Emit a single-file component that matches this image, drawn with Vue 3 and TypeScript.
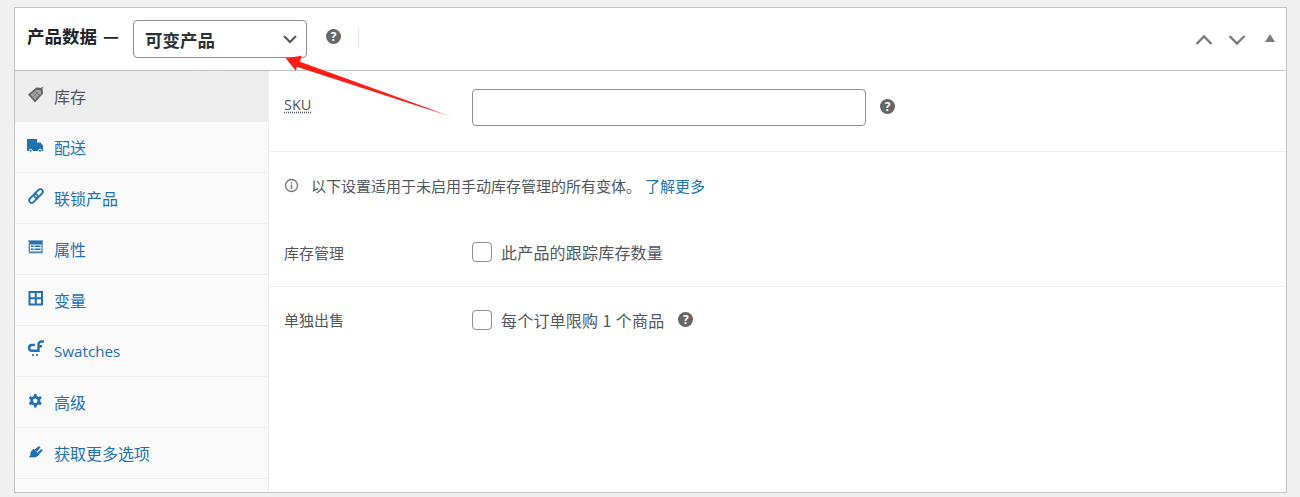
<script setup lang="ts">
interface Tab { key: string; label: string; active?: boolean }
const tabs: Tab[] = [
  { key: 'tag', label: '库存', active: true },
  { key: 'truck', label: '配送' },
  { key: 'link', label: '联锁产品' },
  { key: 'attr', label: '属性' },
  { key: 'grid', label: '变量' },
  { key: 'sw', label: 'Swatches' },
  { key: 'gear', label: '高级' },
  { key: 'plug', label: '获取更多选项' },
]
</script>

<template>
  <div class="page">
    <section class="card">
      <header class="head">
        <h2 class="title">产品数据 —</h2>
        <div class="select">
          <span>可变产品</span>
          <svg class="chev" width="16" height="16" viewBox="0 0 16 16"><path d="M2 5 8 11l6-6" fill="none" stroke="#50575e" stroke-width="2"/></svg>
        </div>
        <span class="help head-help">?</span>
        <span class="sep"></span>
        <div class="head-actions">
          <svg class="up" width="20" height="14" viewBox="0 0 20 14"><path d="M2.500 11 10 3.500 17.500 11" fill="none" stroke="#787c82" stroke-width="2.400"/></svg>
          <svg width="20" height="14" viewBox="0 0 20 14"><path d="M2.500 3 10 10.500 17.500 3" fill="none" stroke="#787c82" stroke-width="2.400"/></svg>
          <svg class="tri" width="10" height="8" viewBox="0 0 10 8"><path d="M5 0 10 8H0z" fill="#787c82"/></svg>
        </div>
      </header>
      <div class="body">
        <nav class="side">
          <a v-for="t in tabs" :key="t.key" class="tab" :class="{ active: t.active }">
            <svg class="ico" width="20" height="22" viewBox="0 0 20 22">
              <g v-if="t.key === 'tag'">
                <path d="M1 12.500 9.500 5.500l6 .5.500 5.500L8 20.500z" fill="#5f5f5f"/>
                <path d="M3.500 12.500 9.500 7.800l4.300.4.300 3.800L8 18z" fill="#a8a8a8"/>
                <path d="M5.500 11l5 5M8 9l5 5M6 15l5-5M9 17l4-5" stroke="#6d6d6d" stroke-width=".8"/>
                <path d="M14 6l2.500-1" stroke="#888" stroke-width="1"/>
              </g>
              <g v-else-if="t.key === 'truck'" fill="#2271b1">
                <path d="M0 6h10v3.500h3.500L16 12.500v5.500H0z"/>
                <circle cx="3.700" cy="17.700" r="1.500" stroke="#fafafa" stroke-width="1"/>
                <circle cx="13" cy="17.700" r="1.500" stroke="#fafafa" stroke-width="1"/>
              </g>
              <g v-else-if="t.key === 'link'" fill="none" stroke="#2271b1" stroke-width="1.800">
                <rect x="9" y="4.500" width="5" height="10" rx="2.500" transform="rotate(45 11.500 9.500)"/>
                <rect x="4" y="9.500" width="5" height="10" rx="2.500" transform="rotate(45 6.500 14.500)"/>
              </g>
              <g v-else-if="t.key === 'attr'">
                <rect x="1.500" y="5" width="14.500" height="13.500" fill="#7fa9cc"/>
                <rect x="2.500" y="6" width="12.500" height="11.500" fill="#2271b1"/>
                <rect x="3" y="9.500" width="11.500" height="7" fill="#f4f7fa"/>
                <path d="M4 10.500h2.500v1.500H4zM4 13.500h2.500V15H4zM7.500 10.500h6V12h-6zM7.500 13.500h6V15h-6z" fill="#2271b1"/>
              </g>
              <g v-else-if="t.key === 'grid'" fill="none" stroke="#2271b1" stroke-width="2">
                <rect x="2.500" y="6" width="12.500" height="12.500"/>
                <path d="M8.750 6v12.500M2.500 12.250h12.500"/>
              </g>
              <g v-else-if="t.key === 'sw'" fill="none" stroke="#2271b1" stroke-width="2.400">
                <path d="M8 8H5a2.900 2.900 0 0 0 0 5.800h7"/>
                <path d="M11.500 15V7.500a3 3 0 0 1 3-3H17M10.500 9.300H15"/>
                <circle cx="6" cy="18" r="1.100" fill="#2271b1" stroke="none"/>
                <circle cx="10" cy="18" r="1.100" fill="#2271b1" stroke="none"/>
              </g>
              <g v-else-if="t.key === 'gear'">
                <path d="M8.300 6v13.400M2.500 9.300l11.600 6.700M14.100 9.300 2.500 16" stroke="#2271b1" stroke-width="2.800"/>
                <circle cx="8.300" cy="12.700" r="5" fill="#2271b1"/>
                <circle cx="8.300" cy="12.700" r="2.200" fill="#fafafa"/>
              </g>
              <g v-else fill="#2271b1">
                <path d="M2 18.500 3.500 15.500C3.300 14 3.800 12.500 5 11.300l1.500-1.500 5.800 5.800-1.500 1.500c-1.500 1.300-3.200 1.500-4.500 1.100z"/>
                <path d="M7.500 10.500 12 7l1.500 1.500-3.800 4.200zM10.500 13.500l4-3.500 1.300 1.300-3.800 4.200z"/>
              </g>
            </svg>
            <span :class="{ latin: t.key === 'sw' }">{{ t.label }}</span>
          </a>
        </nav>
        <div class="main">
          <div class="row sku">
            <span class="lbl dotted"><span>SKU</span></span>
            <input class="input" type="text" />
            <span class="help">?</span>
          </div>
          <div class="notice">
            <svg width="15" height="15" viewBox="0 0 15 15"><circle cx="7.500" cy="7.500" r="6" fill="none" stroke="#777" stroke-width="1.300"/><path d="M7.500 6.500v4.500M7.500 4v1.500" stroke="#777" stroke-width="1.500"/></svg>
            <span class="notice-t">以下设置适用于未启用手动库存管理的所有变体。</span>
            <a class="more">了解更多</a>
          </div>
          <div class="row stock">
            <span class="lbl">库存管理</span>
            <span class="check"></span>
            <span class="cl">此产品的跟踪库存数量</span>
          </div>
          <div class="row sold">
            <span class="lbl">单独出售</span>
            <span class="check"></span>
            <span class="cl">每个订单限购 1 个商品</span>
            <span class="help small">?</span>
          </div>
        </div>
      </div>
    </section>
    <svg class="arrow" width="190" height="70" viewBox="280 54 190 70">
      <defs>
        <linearGradient id="fade" gradientUnits="userSpaceOnUse" x1="300" y1="66" x2="458" y2="119">
          <stop offset="0" stop-color="#fe1e14"/>
          <stop offset=".82" stop-color="#fe1e14"/>
          <stop offset="1" stop-color="#fe1e14" stop-opacity="0"/>
        </linearGradient>
      </defs>
      <path d="M285.700 58.300 301.700 55.700 300 61.700 458 119 296.700 66.700 296 71z" fill="url(#fade)"/>
    </svg>
  </div>
</template>

<style>
html, body { margin: 0; background: #f0f0f1; }
</style>

<style scoped>
.page {
  position: relative;
  width: 1300px;
  height: 497px;
  box-sizing: border-box;
  padding: 7px 13px 4px 14px;
  overflow: hidden;
  font-family: "Noto Sans CJK SC", "Open Sans", sans-serif;
  font-size: 15px;
  color: #50575e;
}
.card {
  height: 100%;
  box-sizing: border-box;
  background: #fff;
  border: 1px solid #c3c4c7;
  display: flex;
  flex-direction: column;
}
.head {
  height: 63px;
  flex: none;
  box-sizing: border-box;
  border-bottom: 1px solid #c3c4c7;
  display: flex;
  align-items: center;
  padding: 0 11px 0 12px;
}
.title {
  margin: 0 13px 0 0;
  font-size: 17.500px;
  font-weight: 700;
  color: #1d2327;
  line-height: 24px;
  word-spacing: 2px;
  width: 93px;
  white-space: nowrap;
  padding-bottom: 6px;
}
.select {
  width: 174px;
  height: 38px;
  box-sizing: border-box;
  border: 1px solid #8c8f94;
  border-radius: 4px;
  display: flex;
  align-items: center;
  justify-content: space-between;
  padding: 0 8px 0 11px;
  font-size: 17.500px;
  font-weight: 700;
  color: #2c3338;
}
.help {
  width: 15px;
  height: 15px;
  border-radius: 50%;
  background: #666;
  color: #fff;
  font-size: 12px;
  font-weight: 700;
  line-height: 15px;
  text-align: center;
  font-family: "Open Sans", sans-serif;
  flex: none;
}
.head-help { margin-left: 19px; margin-top: -5px; }
.sep { width: 1px; height: 20px; background: #e5e5e5; margin-left: 17px; margin-top: -4px; }
.head-actions {
  margin-left: auto;
  display: flex;
  align-items: center;
  gap: 12px;
  margin-top: 2px;
}
.up { margin-right: 1px; }
.tri { margin-left: 6px; margin-top: -4px; }
.body { flex: 1; display: flex; min-height: 0; }
.side {
  width: 254px;
  flex: none;
  box-sizing: border-box;
  background: #fafafa;
  border-right: 1px solid #eee;
}
.tab {
  height: 51px;
  box-sizing: border-box;
  border-bottom: 1px solid #eee;
  display: flex;
  align-items: center;
  padding: 0 0 0 12px;
  font-size: 16px;
  color: #2271b1;
}
.tab .ico { margin-right: 7px; margin-top: -6px; flex: none; }
.tab span { font-family: "Noto Sans CJK SC", sans-serif; }
.tab span.latin { font-family: "Open Sans", sans-serif; font-size: 15.200px; }
.tab.active { background: #eee; color: #50575e; }
.main { flex: 1; min-width: 0; }
.row { display: flex; align-items: center; padding-left: 15px; }
.lbl { width: 188px; flex: none; font-size: 15px; }
.dotted {
  font-family: "Open Sans", sans-serif;
  font-size: 14.500px;
  margin-top: -5px;
}
.dotted span { text-decoration: underline dotted; text-underline-offset: 2px; }
.sku { height: 81px; border-bottom: 1px solid #eee; box-sizing: border-box; padding-bottom: 8px; }
.input {
  width: 394px;
  height: 37px;
  box-sizing: border-box;
  border: 1px solid #8c8f94;
  border-radius: 4px;
  background: #fff;
  margin: 0;
}
.sku .help { margin-left: 14px; margin-top: -1px; }
.notice {
  display: flex;
  align-items: center;
  height: 70px;
  padding: 0 0 4px 15px;
  box-sizing: border-box;
}
.notice-t { margin-left: 12px; }
.more { color: #2271b1; margin-left: 4px; }
.stock { height: 65px; border-bottom: 1px solid #eee; box-sizing: border-box; padding-bottom: 4px; }
.sold { height: 68px; box-sizing: border-box; padding-bottom: 2px; }
.sold .lbl { margin-top: -2px; }
.check {
  width: 20px;
  height: 20px;
  box-sizing: border-box;
  border: 1px solid #8c8f94;
  border-radius: 4px;
  background: #fff;
  flex: none;
}
.cl { margin-left: 9px; font-size: 16px; letter-spacing: .2px; word-spacing: .5px; }
.help.small { margin-left: 14px; margin-top: -2px; }
.arrow { position: absolute; left: 280px; top: 54px; }
</style>
